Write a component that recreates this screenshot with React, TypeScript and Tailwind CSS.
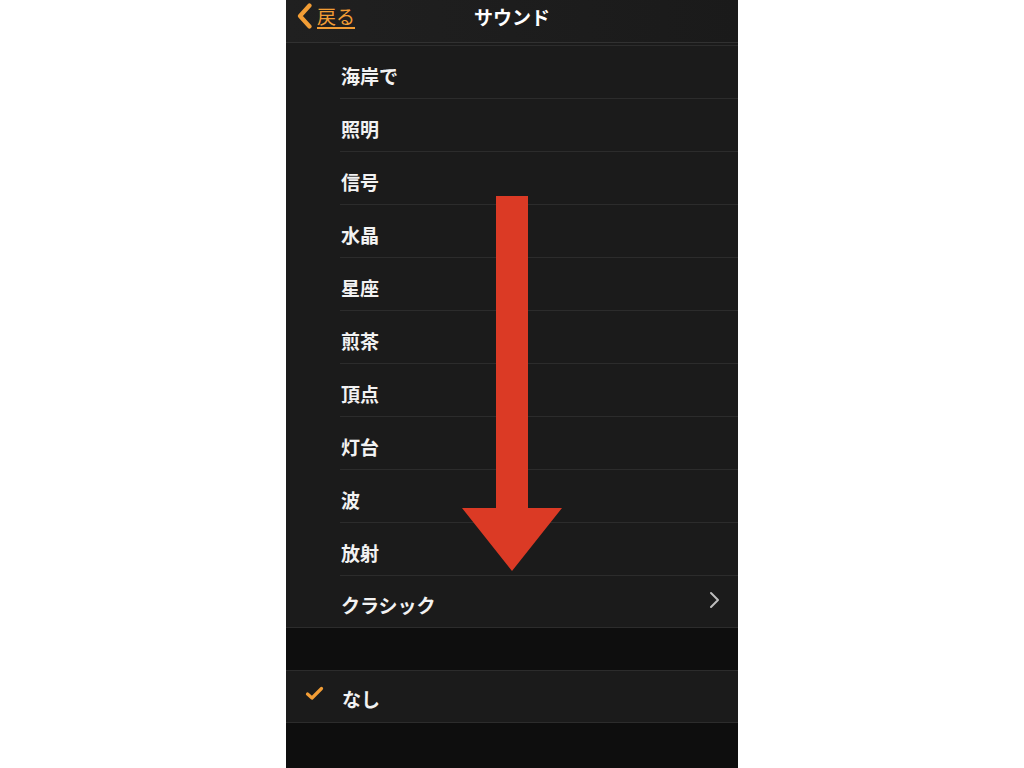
const ROWS = ["海岸で", "照明", "信号", "水晶", "星座", "煎茶", "頂点", "灯台", "波", "放射"];

const jp = { fontFamily: '"Noto Sans CJK JP", "Noto Sans", sans-serif' };

function Row({ label, last, children }: { label: string; last?: boolean; children?: React.ReactNode }) {
  return (
    <div className={last ? "bg-[#1b1b1b] border-b border-[#2c2c2c]" : "bg-[#1b1b1b]"}>
      <div
        className={
          "ml-[54px] flex items-center pl-px pr-[18px] pt-[6px] " +
          (last ? "h-[51px]" : "h-[53px] border-b border-[#2c2c2c]")
        }
      >
        <span className="flex-1 text-[19px] font-bold text-[#f2f2f2] leading-none">{label}</span>
        {children}
      </div>
    </div>
  );
}

export default function App() {
  return (
    <div className="min-h-screen bg-white flex justify-center" style={jp}>
      <div className="relative w-[452px] h-[768px] bg-[#0e0e0e] overflow-hidden">
        {/* nav bar */}
        <div className="h-[43px] bg-gradient-to-r from-[#202020] to-[#1a1a1a] border-b border-[#313131] relative">
          <div className="absolute left-[10px] top-[3px] flex items-center gap-[4px]">
            <svg width="17" height="26" viewBox="0 0 17 26">
              <path d="M13.5 2.5 L4 13 L13.5 23.5" fill="none" stroke="#f29d35" strokeWidth="4.2" strokeLinecap="round" strokeLinejoin="round" />
            </svg>
            <span className="text-[19px] text-[#f29d35] underline underline-offset-[3px] decoration-[2px] leading-none -mt-[2px]">戻る</span>
          </div>
          <div className="absolute inset-x-0 top-[7px] text-center text-[19px] font-bold text-white leading-none">
            サウンド
          </div>
        </div>

        <div className="bg-[#1b1b1b] h-[2px]" />
        <div className="bg-[#1b1b1b]">
          <div className="ml-[54px] border-b border-[#2c2c2c]" />
        </div>

        {ROWS.map((r) => (
          <Row key={r} label={r} />
        ))}
        <Row label="クラシック" last>
          <svg width="12" height="18" viewBox="0 0 12 18" className="-mt-[10px]">
            <path d="M3 2 L10 9 L3 16" fill="none" stroke="#bdbdbd" strokeWidth="2" strokeLinecap="round" strokeLinejoin="round" />
          </svg>
        </Row>

        <div className="h-[42px]" />

        <div className="bg-[#1b1b1b] border-y border-[#2c2c2c] h-[53px] flex items-center">
          <div className="w-[55px] flex justify-center pl-[1px] -mt-[6px]">
            <svg width="19" height="15" viewBox="0 0 19 15">
              <path d="M2.5 8 L7 12 L16.5 2.5" fill="none" stroke="#f29d35" strokeWidth="3.2" strokeLinecap="round" strokeLinejoin="round" />
            </svg>
          </div>
          <span className="text-[19px] font-bold text-[#f2f2f2] leading-none pt-[4px] pl-[1px]">なし</span>
        </div>

        {/* annotation arrow */}
        <svg className="absolute left-0 top-0" width="452" height="768" viewBox="0 0 452 768">
          <path d="M210 196 H242 V508 H276 L226 571 L176 508 H210 Z" fill="#db3a25" />
        </svg>
      </div>
    </div>
  );
}
